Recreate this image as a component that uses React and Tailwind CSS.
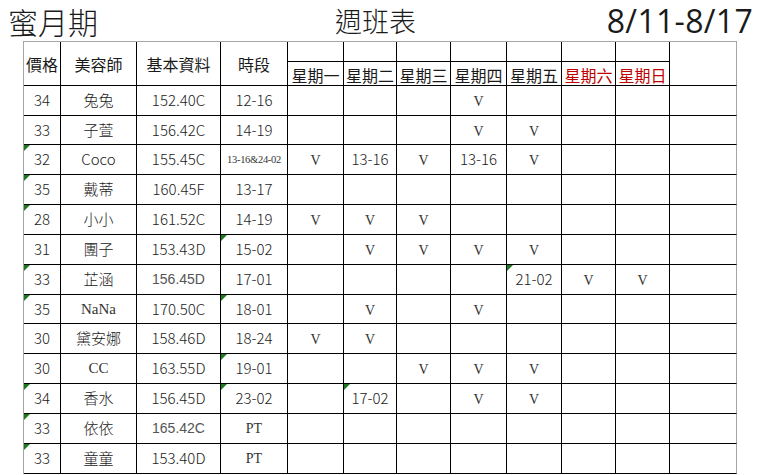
import React from 'react';

const colW = ['w-[37px]', 'w-[76px]', 'w-[84px]', 'w-[67px]', 'w-[56px]', 'w-[53px]', 'w-[54px]', 'w-[56px]', 'w-[55px]', 'w-[54px]', 'w-[54px]', 'w-[67px]'];

const days = [
  { label: '星期一' },
  { label: '星期二' },
  { label: '星期三' },
  { label: '星期四' },
  { label: '星期五' },
  { label: '星期六', red: true },
  { label: '星期日', red: true },
];

// tri: column indexes that carry the green corner mark
const rows = [
  { h: 'h-[30px]', price: '34', name: '兔兔', info: '152.40C', time: '12-16', days: ['', '', '', 'V', '', '', ''], tri: [] },
  { h: 'h-[29px]', price: '33', name: '子萱', info: '156.42C', time: '14-19', days: ['', '', '', 'V', 'V', '', ''], tri: [] },
  { h: 'h-[30px]', price: '32', name: 'Coco', info: '155.45C', time: '13-16&24-02', small: true, days: ['V', '13-16', 'V', '13-16', 'V', '', ''], tri: [0] },
  { h: 'h-[30px]', price: '35', name: '戴蒂', info: '160.45F', time: '13-17', days: ['', '', '', '', '', '', ''], tri: [0] },
  { h: 'h-[30px]', price: '28', name: '小小', info: '161.52C', time: '14-19', days: ['V', 'V', 'V', '', '', '', ''], tri: [0] },
  { h: 'h-[30px]', price: '31', name: '團子', info: '153.43D', time: '15-02', days: ['', 'V', 'V', 'V', 'V', '', ''], tri: [3] },
  { h: 'h-[30px]', price: '33', name: '芷涵', info: '156.45D', arial: true, time: '17-01', days: ['', '', '', '', '21-02', 'V', 'V'], tri: [0, 8] },
  { h: 'h-[29px]', price: '35', name: 'NaNa', latin: true, info: '170.50C', time: '18-01', days: ['', 'V', '', 'V', '', '', ''], tri: [0, 3] },
  { h: 'h-[30px]', price: '30', name: '黛安娜', info: '158.46D', time: '18-24', days: ['V', 'V', '', '', '', '', ''], tri: [] },
  { h: 'h-[30px]', price: '30', name: 'CC', latin: true, info: '163.55D', time: '19-01', days: ['', '', 'V', 'V', 'V', '', ''], tri: [3] },
  { h: 'h-[30px]', price: '34', name: '香水', info: '156.45D', time: '23-02', days: ['', '17-02', '', 'V', 'V', '', ''], tri: [0, 3, 5] },
  { h: 'h-[30px]', price: '33', name: '依依', info: '165.42C', arial: true, time: 'PT', days: ['', '', '', '', '', '', ''], tri: [0] },
  { h: 'h-[30px]', price: '33', name: '童童', info: '153.40D', time: 'PT', days: ['', '', '', '', '', '', ''], tri: [0] },
];

const serif = "font-['Liberation_Serif',serif] text-[#333]";

function Corner() {
  return <span className="absolute left-0 top-0 h-0 w-0 border-t-[6px] border-r-[6px] border-t-[#1f7a1f] border-r-transparent" />;
}

function Cell({ i, h, tri, last, children, className = '' }) {
  return (
    <div
      className={`relative flex shrink-0 items-center justify-center border-b border-r ${colW[i]} ${h} ${
        last ? 'border-b-black border-r-[#a6a6a6]' : 'border-black'
      } ${className}`}
    >
      {tri && <Corner />}
      {children}
    </div>
  );
}

function DayValue({ v }) {
  if (!v) return null;
  if (v === 'V') return <span className={`${serif} text-[14px] pt-[2px]`}>V</span>;
  return <span className="text-[15px] font-light">{v}</span>;
}

export default function App() {
  return (
    <div className="h-[475px] w-[758px] overflow-hidden bg-white text-[#1a1a1a] font-['Noto_Sans_CJK_TC',sans-serif]">
      <div className="flex h-[41px] items-center pl-[8px] pr-[5px] text-[#1a1a1a]">
        <span className="w-[327px] text-[30px] leading-none font-light">蜜月期</span>
        <span className="text-[27px] leading-none font-light">週班表</span>
        <span className="ml-auto text-[32px] leading-none font-['Open_Sans',sans-serif] tracking-[0.3px]">8/11-8/17</span>
      </div>

      <div className="ml-[23px] w-[714px] border-l border-t border-l-[#a6a6a6] border-t-[#a6a6a6]">
        <div className="flex">
          <Cell i={0} h="h-[44px]" className="text-[16px]">價格</Cell>
          <Cell i={1} h="h-[44px]" className="text-[16px]">美容師</Cell>
          <Cell i={2} h="h-[44px]" className="text-[16px]">基本資料</Cell>
          <Cell i={3} h="h-[44px]" className="text-[16px]">時段</Cell>
          {days.map((d, k) => (
            <div key={d.label} className="flex flex-col">
              <Cell i={4 + k} h="h-[20px]" />
              <Cell i={4 + k} h="h-[24px]" className={`text-[16px] leading-none ${d.red ? 'text-[#c00000]' : ''}`}>
                <span className="pt-[3px]">{d.label}</span>
              </Cell>
            </div>
          ))}
          <Cell i={11} h="h-[44px]" last />
        </div>

        {rows.map((r) => (
          <div key={r.name} className="flex">
            <Cell i={0} h={r.h} tri={r.tri.includes(0)} className="text-[15px] font-light">{r.price}</Cell>
            <Cell
              i={1}
              h={r.h}
              tri={r.tri.includes(1)}
              className={r.latin ? `${serif} text-[15px]` : 'text-[15px] font-light'}
            >
              {r.name}
            </Cell>
            <Cell
              i={2}
              h={r.h}
              className={r.arial ? "font-['Liberation_Sans',sans-serif] text-[14px] text-[#555]" : 'text-[15px] font-light'}
            >
              {r.info}
            </Cell>
            <Cell
              i={3}
              h={r.h}
              tri={r.tri.includes(3)}
              className={r.small ? `${serif} text-[10.5px] tracking-[-0.3px]` : r.time === 'PT' ? `${serif} text-[14px]` : 'text-[15px] font-light'}
            >
              {r.time}
            </Cell>
            {r.days.map((v, k) => (
              <Cell key={k} i={4 + k} h={r.h} tri={r.tri.includes(4 + k)}>
                <DayValue v={v} />
              </Cell>
            ))}
            <Cell i={11} h={r.h} last />
          </div>
        ))}
      </div>
    </div>
  );
}
